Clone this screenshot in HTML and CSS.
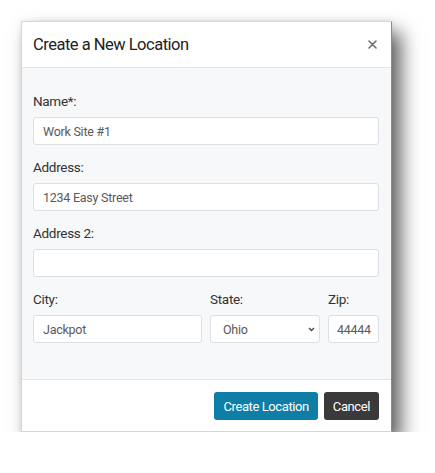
FILE: index.html
```html
<!DOCTYPE html>
<html lang="en">
<head>
  <meta charset="UTF-8" />
  <meta name="viewport" content="width=device-width, initial-scale=1.0"/>
  <title>Create a New Location</title>
  <link rel="stylesheet" href="styles.css">
</head>
<body>
  <div class="modal">
    <div class="modal-header">
      <h5 class="modal-title">Create a New Location</h5>
      <button class="close" type="button" aria-label="Close">
        <svg width="9" height="9" viewBox="0 0 9 9">
          <path d="M1 1 L8 8 M8 1 L1 8" stroke="#6b6b6b" stroke-width="1.5" stroke-linecap="round"/>
        </svg>
      </button>
    </div>

    <form class="modal-body">
      <div class="form-group">
        <label for="name">Name*:</label>
        <input id="name" class="form-control" type="text" value="Work Site #1">
      </div>
      <div class="form-group">
        <label for="address">Address:</label>
        <input id="address" class="form-control" type="text" value="1234 Easy Street">
      </div>
      <div class="form-group">
        <label for="address2">Address 2:</label>
        <input id="address2" class="form-control" type="text" value="">
      </div>
      <div class="form-row">
        <div class="form-group">
          <label for="city">City:</label>
          <input id="city" class="form-control" type="text" value="Jackpot">
        </div>
        <div class="form-group">
          <label for="state">State:</label>
          <div class="select-wrap">
            <select id="state" class="form-control">
              <option>Ohio</option>
            </select>
            <svg class="chevron" width="7" height="5" viewBox="0 0 7 5">
              <path d="M1 1 L3.5 3.5 L6 1" fill="none" stroke="#444" stroke-width="1.3"/>
            </svg>
          </div>
        </div>
        <div class="form-group">
          <label for="zip">Zip:</label>
          <input id="zip" class="form-control zip" type="text" value="44444">
        </div>
      </div>
    </form>

    <div class="modal-footer">
      <button class="btn btn-info" type="button">Create Location</button>
      <button class="btn btn-dark" type="button">Cancel</button>
    </div>
  </div>
</body>
</html>
```

FILE: styles.css
```css
* {
  box-sizing: border-box;
}

body {
  margin: 0;
  background: #fff;
  font-family: Roboto, 'Liberation Sans', sans-serif;
  color: #2b2b2b;
}

.modal {
  width: 371px;
  margin: 21px 0 0 21px;
  background: #fff;
  border: 1px solid #d6d6d6;
  border-right-color: #8a8a8a;
  box-shadow: 9px 11px 18px rgba(0, 0, 0, 0.62), 0 0 5px rgba(0, 0, 0, 0.08);
}

.modal-header {
  display: flex;
  align-items: center;
  justify-content: space-between;
  height: 46px;
  padding: 0 14px 1px 11px;
  border-bottom: 1px solid #e3e5e8;
}

.modal-title {
  margin: 0;
  font-size: 16.5px;
  font-weight: 400;
  letter-spacing: -0.5px;
  color: #222;
}

.close {
  border: 0;
  background: none;
  padding: 0;
  display: flex;
  cursor: pointer;
}

.modal-body {
  margin: 0;
  padding: 23px 12px 24px 11px;
  background: #f7f8fa;
}

.form-group {
  display: flex;
  flex-direction: column;
  margin-bottom: 12px;
}

.form-group label {
  font-size: 13.5px;
  line-height: 21px;
  margin-bottom: 5px;
  letter-spacing: -0.3px;
  color: #333;
}

.form-control {
  width: 100%;
  height: 28px;
  padding: 0 9px;
  border: 1px solid #dcdfe3;
  border-radius: 3px;
  background: #fff;
  font-family: inherit;
  font-size: 12.5px;
  letter-spacing: -0.25px;
  color: #5a5a5a;
}

.form-row {
  display: grid;
  grid-template-columns: 1fr 110px 51px;
  gap: 8px;
}

.select-wrap {
  position: relative;
}

.select-wrap select {
  appearance: none;
  -webkit-appearance: none;
  padding-left: 12px;
}

.chevron {
  position: absolute;
  top: 12px;
  right: 5px;
  pointer-events: none;
}

.zip {
  padding: 0 0 0 8px;
}

.modal-footer {
  display: flex;
  justify-content: flex-end;
  gap: 6px;
  padding: 12px 12px 11px;
  border-top: 1px solid #e3e5e8;
}

.btn {
  height: 28px;
  padding: 0 9px;
  border: 0;
  border-radius: 3px;
  font-family: inherit;
  font-size: 13px;
  letter-spacing: -0.4px;
  color: #fff;
  cursor: pointer;
}

.btn-info {
  background: #0f7ea7;
}

.btn-dark {
  background: #3a3a3a;
}
```
